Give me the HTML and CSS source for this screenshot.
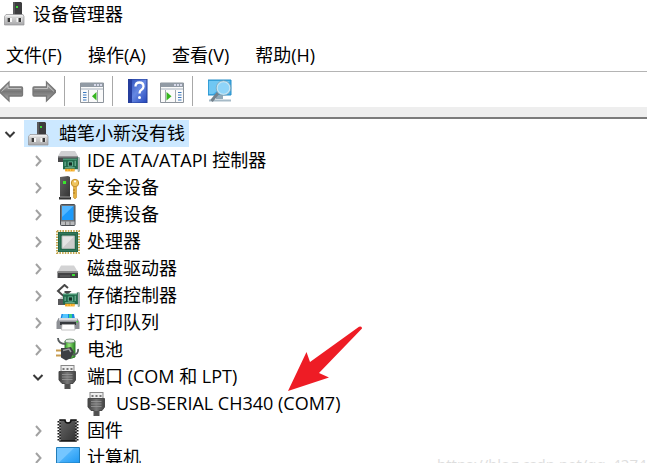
FILE: index.html
```html
<!DOCTYPE html>
<html lang="zh-CN">
<head>
<meta charset="utf-8">
<title>设备管理器</title>
<link rel="stylesheet" href="styles.css">
</head>
<body>
<svg class="defs" aria-hidden="true">
  <defs>
    <linearGradient id="grey" x1="0" y1="0" x2="0" y2="1"><stop offset="0" stop-color="#e2e2e2"/><stop offset="1" stop-color="#a9a9ab"/></linearGradient>
    <linearGradient id="arrow" x1="0" y1="0" x2="0" y2="1"><stop offset="0" stop-color="#c4c4c4"/><stop offset=".5" stop-color="#777"/><stop offset="1" stop-color="#aaa"/></linearGradient>
    <linearGradient id="dark" x1="0" y1="0" x2="1" y2="1"><stop offset="0" stop-color="#666"/><stop offset="1" stop-color="#333"/></linearGradient>
    <linearGradient id="plug" x1="0" y1="0" x2="1" y2="0"><stop offset="0" stop-color="#3f3f3f"/><stop offset=".5" stop-color="#787878"/><stop offset="1" stop-color="#444"/></linearGradient>
    <linearGradient id="blue" x1="0" y1="0" x2="1" y2="1"><stop offset="0" stop-color="#7ccaff"/><stop offset=".5" stop-color="#4bb2fb"/><stop offset="1" stop-color="#1e98f2"/></linearGradient>
    <linearGradient id="help" x1="0" y1="0" x2="1" y2="1"><stop offset="0" stop-color="#2446b4"/><stop offset=".5" stop-color="#6688e2"/><stop offset="1" stop-color="#2345ba"/></linearGradient>
    <linearGradient id="green" x1="0" y1="0" x2="1" y2="0"><stop offset="0" stop-color="#2c9c24"/><stop offset=".4" stop-color="#9be67c"/><stop offset="1" stop-color="#24881e"/></linearGradient>
    <symbol id="i-pc" viewBox="0 0 24 24">
      <path d="M9 0h8l1 1v12H9z" fill="#3c3c3e"/><path d="M9 0h2v13H9z" fill="#59595b"/>
      <rect x="12" y="4" width="2" height="2" fill="#38d838"/>
      <path d="M2 12.500h17l1 2v8.500H.5v-8.500z" fill="url(#grey)" stroke="#949496" stroke-width=".7"/>
      <path d="M2 13h16.500l.6 1.500H1.500z" fill="#eee"/>
      <path d="M3 16h5v4H3zM12.500 16h5v4h-5z" fill="#f7f7f7"/><path d="M3.500 16h2.500v4H3.500zM14.500 16H17v4h-2.500z" fill="#3c3c3c"/>
    </symbol>
    <symbol id="i-usb" viewBox="0 0 24 24">
      <rect x="5" y=".5" width="13" height="7" fill="#eee" stroke="#878787"/>
      <path d="M6.500 3h2v2h-2zM10.500 3h2v2h-2zM14.500 3h2v2h-2z" fill="#777"/>
      <path d="M3 6.500h16.500V15L17 18.500h-3V24H9v-5.500H6L3 15z" fill="url(#plug)" stroke="#4b4b4b"/>
      <path d="M6 9.500h10.500M6 12h10.500M6 14.500h10.500" stroke="#999" stroke-width=".8"/><path d="M9.500 19h4v4.500h-4z" fill="#505050"/>
    </symbol>
    <symbol id="i-card" viewBox="0 0 16 13">
      <path d="M0 1h13V0h2.500v13H14v-2H0z" fill="#226b4c"/><path d="M0 1h13v1H0z" fill="#58a884"/>
      <path d="M14 0h1.500v13H14z" fill="#a8afb3"/>
      <path d="M5 4h4v4H5z" fill="#142e25" stroke="#72c3a0" stroke-width=".8"/><path d="M2 4v4M11.500 3v5M2 9.500h9" stroke="#79b99d" fill="none"/>
      <path d="M2 10.500h9V13H2z" fill="#f3a51d"/><path d="M4.500 11v2M7 11v2M9.500 11v2" stroke="#ffdc79" stroke-width=".6"/>
    </symbol>
    <symbol id="i-window" viewBox="0 0 24 24">
      <path d="M.5 4h23v19.500H.5z" fill="#fafafa" stroke="#8d949c"/><path d="M1 4h22v4H1z" fill="#929ba5"/><path d="M1 9h22v2H1z" fill="#d0d5db"/>
      <path d="M14 6h2M17 6h2M20 6h2" stroke="#eef" stroke-width="1.500"/>
    </symbol>
    <symbol id="i-right" viewBox="0 0 12 12"><path d="M4 1l4.500 5L4 11" fill="none" stroke="#a2a2a2" stroke-width="2"/></symbol>
    <symbol id="i-down" viewBox="0 0 12 12"><path d="M1.500 4L6 8.500 10.500 4" fill="none" stroke="#383838" stroke-width="2"/></symbol>
  </defs>
</svg>

<header class="title-bar">
  <svg class="icon"><use href="#i-pc"/></svg>
  <h1 class="title">设备管理器</h1>
</header>

<nav class="menu-bar" aria-label="菜单">
  <button type="button">文件(F)</button>
  <button type="button">操作(A)</button>
  <button type="button">查看(V)</button>
  <button type="button">帮助(H)</button>
</nav>

<div class="toolbar" role="toolbar" aria-label="工具栏">
  <button type="button" aria-label="后退"><svg class="icon" viewBox="0 0 24 24"><path d="M-1 12.500L9 3v5h12.500q1 0 1 1v7q0 1-1 1H9v5z" fill="url(#arrow)" stroke="#777" stroke-width="1.300"/><path d="M1.500 12.500L8 6.500v3h13" fill="none" stroke="#ccc" stroke-width=".8"/></svg></button>
  <button type="button" aria-label="前进"><svg class="icon" viewBox="0 0 24 24"><path d="M24.500 12.500L14.500 3v5H2Q1 8 1 9v7q0 1 1 1h12.500v5z" fill="url(#arrow)" stroke="#777" stroke-width="1.300"/><path d="M2.500 9.500h13v-3l6.500 6" fill="none" stroke="#ccc" stroke-width=".8"/></svg></button>
  <span class="separator"></span>
  <button type="button" aria-label="显示控制台树"><svg class="icon" viewBox="0 0 24 24"><use href="#i-window"/><path d="M8.500 11v12M17.500 11v12" stroke="#a2a8ae"/><path d="M3 13.500h3.500M3 16h3.500M3 18.500h3.500M3 21h3.500" stroke="#3c78bd" stroke-width="1.200"/><path d="M16.500 13v8.500L12 17.200z" fill="#35b51e"/></svg></button>
  <span class="separator"></span>
  <button type="button" aria-label="帮助"><svg class="icon" viewBox="0 0 24 24"><path d="M0 0h19v24H0z" fill="url(#help)"/><path d="M0 0h4v24H0z" fill="#263e9f"/><path d="M0 0h19v24H0z" fill="none" stroke="#243e98"/><path d="M7.500 7.500q0-4 4-4t4 4q0 2-2 3.300-2 1.200-2 3.700" fill="none" stroke="#fff" stroke-width="2.300"/><circle cx="11.500" cy="18.500" r="1.500" fill="#fff"/></svg></button>
  <button type="button" aria-label="显示操作窗格"><svg class="icon" viewBox="0 0 24 24"><use href="#i-window"/><path d="M5.500 11v12M15.500 11v12" stroke="#a2a8ae"/><path d="M18 13.500h3.500M18 16h3.500M18 18.500h3.500M18 21h3.500" stroke="#3c78bd" stroke-width="1.200"/><path d="M6.500 13v8.500l5-4.300z" fill="#35b51e"/></svg></button>
  <span class="separator"></span>
  <button type="button" aria-label="扫描检测硬件改动"><svg class="icon" viewBox="0 0 24 24"><path d="M0 1h23v15H0z" fill="#42aee9" stroke="#278fc8"/><path d="M1 2h21L5 15H1z" fill="#70c7f3"/><path d="M8 16h7v4H8z" fill="#91a9b8"/><path d="M1 20.500h22v2H1z" fill="#a6bac7"/><path d="M10 14l-6.500 8" stroke="#74818b" stroke-width="3"/><circle cx="15.500" cy="9" r="6.500" fill="#8fd4f8" stroke="#c6e5f3" stroke-width="1.500"/><circle cx="15.500" cy="9" r="7.300" fill="none" stroke="#7697a9" stroke-width=".6"/></svg></button>
</div>

<main class="tree">
  <ul>
    <li>
      <div class="row"><button class="toggle" type="button" aria-label="折叠" aria-expanded="true"><svg><use href="#i-down"/></svg></button><span class="item selected"><svg class="icon"><use href="#i-pc"/></svg>蜡笔小新没有钱</span></div>
      <ul>
        <li><div class="row"><button class="toggle" type="button" aria-label="展开" aria-expanded="false"><svg><use href="#i-right"/></svg></button><span class="item"><svg class="icon" viewBox="0 0 24 24"><path d="M5 2h14l3 5H2z" fill="#d0d0d2"/><path d="M2 7h20v6H2z" fill="#49494b"/><path d="M2 7h20v1.500H2z" fill="#919193"/><use href="#i-card" x="7" y="8" width="17" height="15"/></svg>IDE ATA/ATAPI 控制器</span></div></li>
        <li><div class="row"><button class="toggle" type="button" aria-label="展开" aria-expanded="false"><svg><use href="#i-right"/></svg></button><span class="item"><svg class="icon" viewBox="0 0 24 24"><path d="M4 1l8-1 2 1v20H4z" fill="url(#dark)"/><path d="M3 21h12v2.500H3z" fill="#333"/><path d="M4 21h10" stroke="#999"/><path d="M7 5h3v3H7z" fill="#3ae72e"/><circle cx="19" cy="7" r="3.700" fill="#efc45d" stroke="#c48f29"/><circle cx="19" cy="5.500" r="1" fill="#fff"/><path d="M17.500 10.500h3v11L19 23l-1.500-1.500z" fill="#e6b342" stroke="#c48f29" stroke-width=".6"/><path d="M17 14h2M17 17h2" stroke="#a8741c"/></svg>安全设备</span></div></li>
        <li><div class="row"><button class="toggle" type="button" aria-label="展开" aria-expanded="false"><svg><use href="#i-right"/></svg></button><span class="item"><svg class="icon" viewBox="0 0 24 24"><rect x="4.500" y="1.500" width="14.500" height="21" rx="1" fill="#707478" stroke="#494e54"/><path d="M6 3h11.500v14H6z" fill="#1d9afa"/><path d="M6 3h11.500L6 14z" fill="#52b6ff"/><path d="M5 18.500h13.500V22H5z" fill="#b8babc"/><path d="M9.500 18.500V22M14 18.500V22" stroke="#777"/></svg>便携设备</span></div></li>
        <li><div class="row"><button class="toggle" type="button" aria-label="展开" aria-expanded="false"><svg><use href="#i-right"/></svg></button><span class="item"><svg class="icon" viewBox="0 0 24 24"><rect x="1" y="1" width="22" height="22" fill="none" stroke="#c4a64f" stroke-width="2" stroke-dasharray="1.500 1.200"/><path d="M2 2h20v20H2z" fill="#23694b"/><path d="M3.500 3.500h17v17h-17z" fill="none" stroke="#34765b"/><path d="M6 6h12.500v12.500H6z" fill="#ccc" stroke="#a7b3ad"/><path d="M6.500 18V6.500H18z" fill="#e4e4e4"/></svg>处理器</span></div></li>
        <li><div class="row"><button class="toggle" type="button" aria-label="展开" aria-expanded="false"><svg><use href="#i-right"/></svg></button><span class="item"><svg class="icon" viewBox="0 0 24 24"><path d="M5 8.500h13l4 6.500H1.500z" fill="#d3d3d4"/><path d="M1.500 14.500H22V21H1.500z" fill="#434345"/><path d="M1.500 14.500H22v1.500H1.500z" fill="#888"/><path d="M4 19h10" stroke="#686868"/><path d="M16 17h3v2h-3z" fill="#3bdc35"/></svg>磁盘驱动器</span></div></li>
        <li><div class="row"><button class="toggle" type="button" aria-label="展开" aria-expanded="false"><svg><use href="#i-right"/></svg></button><span class="item"><svg class="icon" viewBox="0 0 24 24"><path d="M12 4L8.500 1 2 7l6 5.500 5-4.500H8.500" fill="none" stroke="#474747" stroke-width="2"/><path d="M2 15h9v6H2z" fill="#58585a"/><path d="M3 15l2-2h5v2z" fill="#ccc"/><use href="#i-card" x="7" y="8" width="17" height="15"/></svg>存储控制器</span></div></li>
        <li><div class="row"><button class="toggle" type="button" aria-label="展开" aria-expanded="false"><svg><use href="#i-right"/></svg></button><span class="item"><svg class="icon" viewBox="0 0 24 24"><path d="M5.500 3H18l1 5H4.500z" fill="#1985e2"/><path d="M7 3h5v4H6z" fill="#55c5ff"/><path d="M13 3h3v4h-3z" fill="#37cf8a"/><path d="M2.500 7H21l2.500 4v7H.5v-7z" fill="#8d9095"/><path d="M3 7h18v2.500H3z" fill="#d9dade"/><path d="M4 11h16v3H4z" fill="#36393d"/><path d="M6 13.500h12.500L19 19H5.500z" fill="#fff" stroke="#aaa" stroke-width=".7"/><path d="M20.500 10h1.500v1.500h-1.500z" fill="#39de37"/></svg>打印队列</span></div></li>
        <li><div class="row"><button class="toggle" type="button" aria-label="展开" aria-expanded="false"><svg><use href="#i-right"/></svg></button><span class="item"><svg class="icon" viewBox="0 0 24 24"><path d="M9 3h10v16q-5 3-10 0z" fill="url(#green)" stroke="#397c36"/><ellipse cx="14" cy="3" rx="5" ry="2" fill="#dce9dc" stroke="#65806a" stroke-width=".8"/><path d="M2 0q0 6 8 6M17 17q6-1 5-6" fill="none" stroke="#565b5d" stroke-width="1.800"/><path d="M0 12.500h6M0 17.500h6" stroke="#c79b4e" stroke-width="2"/><path d="M5 10h5l5-1 3 5-3 6-5 2.500-5-3z" fill="#3e4043"/><path d="M7 12.500l6-1.500 2 3" fill="none" stroke="#989b9e" stroke-width="1.500"/></svg>电池</span></div></li>
        <li>
          <div class="row"><button class="toggle" type="button" aria-label="折叠" aria-expanded="true"><svg><use href="#i-down"/></svg></button><span class="item"><svg class="icon"><use href="#i-usb"/></svg>端口 (COM 和 LPT)</span></div>
          <ul>
            <li><div class="row leaf"><span class="item"><svg class="icon"><use href="#i-usb"/></svg>USB-SERIAL CH340 (COM7)</span></div></li>
          </ul>
        </li>
        <li><div class="row"><button class="toggle" type="button" aria-label="展开" aria-expanded="false"><svg><use href="#i-right"/></svg></button><span class="item"><svg class="icon" viewBox="0 0 24 24"><path d="M4 1h5q0 3 3 3t3-3h5v21H4z" fill="url(#dark)" stroke="#111" stroke-width="1.500"/><path d="M3 2v20M21 2v20" stroke="#171717" stroke-width="3" stroke-dasharray="1.500 1.500"/><path d="M4 2v20M20 2v20" stroke="#eee" stroke-width="1" stroke-dasharray="1.500 1.500"/></svg>固件</span></div></li>
        <li><div class="row"><button class="toggle" type="button" aria-label="展开" aria-expanded="false"><svg><use href="#i-right"/></svg></button><span class="item"><svg class="icon" viewBox="0 0 24 24"><path d="M.5 1.500h23v15.500H.5z" fill="url(#blue)" stroke="#217cb8"/><path d="M1 2h17L3 16.500H1z" fill="#75c6ff"/><path d="M9 17h6v3H9z" fill="#9ba6ad"/><path d="M6 20h12v2H6z" fill="#bbc4c9"/></svg>计算机</span></div></li>
      </ul>
    </li>
  </ul>
  <svg class="pointer" viewBox="0 0 76 66" aria-hidden="true"><path d="M0 65L18.500 26l3.500 10L71 .8q3-1.200 3 1.700L31 47l10 4.500z" fill="#ee1c25"/></svg>
</main>
<span class="watermark">https://blog.csdn.net/qq_4274</span>
</body>
</html>
```
FILE: styles.css
```css
* {
  box-sizing: border-box;
}

body {
  position: relative;
  display: flex;
  flex-direction: column;
  height: 100vh;
  margin: 0;
  overflow: hidden;
  background: #fff;
  color: #000;
  font: 18px/27px "Open Sans", "Noto Sans CJK SC", sans-serif;
}

button {
  padding: 0;
  border: 0;
  background: none;
  color: inherit;
  font: inherit;
}

ul {
  margin: 0;
  padding: 0;
  list-style: none;
}

.defs {
  position: absolute;
  width: 0;
  height: 0;
}

.icon {
  display: block;
  flex: none;
  width: 24px;
  height: 24px;
}

.title-bar {
  display: flex;
  flex: none;
  align-items: center;
  gap: 5px;
  height: 28px;
  padding-left: 4px;
}

.title {
  margin: 0;
  font-size: 18px;
  font-weight: 400;
}

.menu-bar {
  display: flex;
  flex: none;
  align-items: center;
  gap: 26px;
  height: 44px;
  padding: 12px 6px 0;
  border-bottom: 1px solid #b4b4b4;
}

.toolbar {
  display: flex;
  flex: none;
  align-items: center;
  gap: 8px;
  height: 35px;
  padding-top: 2px;
  background: #fff;
}

.separator {
  width: 1px;
  height: 30px;
  margin-right: 7px;
  background: #a8a8a8;
}

.tree {
  position: relative;
  flex: 1;
  min-height: 0;
  border-top: 10px solid #eee;
  white-space: nowrap;
}

.tree > ul {
  padding-top: 1px;
  border-top: 2px solid #7b7b7b;
}

.row {
  display: flex;
  align-items: center;
  gap: 8px;
  height: 27px;
  padding-left: 4px;
}

.tree ul ul {
  padding-left: 28px;
}

.leaf {
  padding-left: 25px;
}

.toggle,
.toggle svg {
  display: block;
  width: 12px;
  height: 12px;
}

.item {
  display: flex;
  align-items: center;
  gap: 7px;
  height: 27px;
  padding: 0 4px;
}

.selected {
  background: #cce8ff;
}

.pointer {
  position: absolute;
  top: 209px;
  left: 288px;
  width: 76px;
  height: 66px;
}

.watermark {
  position: absolute;
  top: 453px;
  left: 437px;
  color: #dedede;
  font-size: 15px;
  line-height: 22px;
  white-space: nowrap;
}
```
